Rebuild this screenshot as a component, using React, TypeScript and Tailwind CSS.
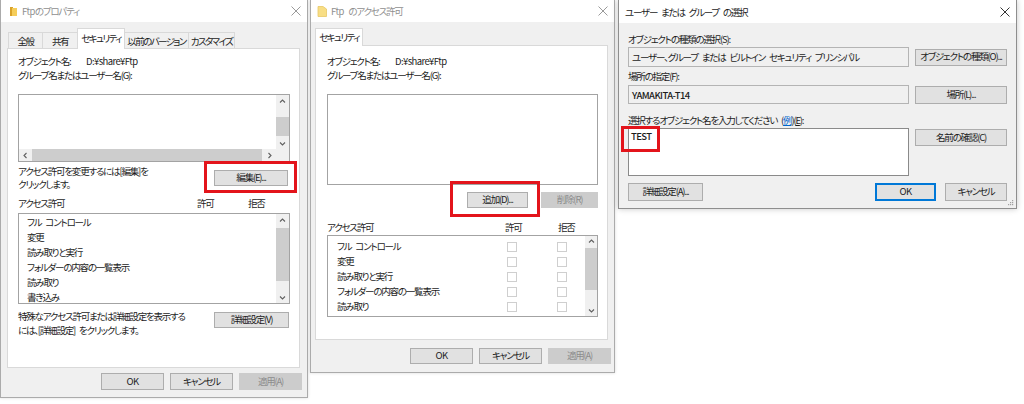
import React from 'react';

type Dir = 'up' | 'down' | 'left' | 'right';

const ARROWS: Record<Dir, string> = {
  up: 'M1 4.5 L3.5 2 L6 4.5',
  down: 'M1 2.5 L3.5 5 L6 2.5',
  left: 'M4.5 1 L2 3.5 L4.5 6',
  right: 'M2.5 1 L5 3.5 L2.5 6',
};

const Arrow = ({ dir }: { dir: Dir }) => (
  <svg width="7" height="7" viewBox="0 0 7 7">
    <path d={ARROWS[dir]} fill="none" stroke="#606060" strokeWidth="1.1" />
  </svg>
);

const CloseX = ({ color }: { color: string }) => (
  <svg width="10" height="10" viewBox="0 0 10 10">
    <path d="M0.5 0.5 L9.5 9.5 M9.5 0.5 L0.5 9.5" stroke={color} strokeWidth="1" />
  </svg>
);

const FolderSmall = () => (
  <svg width="7" height="9" viewBox="0 0 7 9">
    <rect x="0" y="0" width="3" height="9" fill="#d9a22a" />
    <rect x="2" y="1" width="5" height="8" fill="#f5cd5a" />
  </svg>
);

const FolderPale = () => (
  <svg width="10" height="11" viewBox="0 0 10 11">
    <path d="M1 0.5 H6 L9.5 3 V10.5 H1 Z" fill="#f8de85" stroke="#e9c866" strokeWidth="0.8" />
  </svg>
);

function Btn({
  children,
  className = '',
  disabled = false,
  focused = false,
}: {
  children: React.ReactNode;
  className?: string;
  disabled?: boolean;
  focused?: boolean;
}) {
  const look = disabled
    ? 'bg-[#cccccc] border border-[#cccccc] text-[#8d8d8d]'
    : focused
    ? 'bg-[#e1e1e1] border-2 border-[#0078d7]'
    : 'bg-[#e1e1e1] border border-[#adadad]';
  return (
    <div className={`flex items-center justify-center leading-none whitespace-nowrap ${look} ${className}`}>{children}</div>
  );
}

// vertical scrollbar: arrow / spacer / thumb / rest / arrow
function VScroll({ w, arrow, pre, thumb }: { w: string; arrow: string; pre: string; thumb: string }) {
  return (
    <div className={`${w} h-full bg-[#f0f0f0] flex flex-col shrink-0`}>
      <div className={`${arrow} flex items-center justify-center`}>
        <Arrow dir="up" />
      </div>
      <div className={pre} />
      <div className={`${thumb} bg-[#cdcdcd]`} />
      <div className="flex-1" />
      <div className={`${arrow} flex items-center justify-center`}>
        <Arrow dir="down" />
      </div>
    </div>
  );
}

const Checkbox = () => <div className="w-[10px] h-[10px] shrink-0 border border-[#cfcfcf] bg-white" />;

const RedBox = ({ className }: { className: string }) => (
  <div className={`absolute border-[3px] border-[#e3141b] pointer-events-none ${className}`} />
);

// latin text keeps a milder squeeze than the kana
const Latin = ({ children, className = '' }: { children: React.ReactNode; className?: string }) => (
  <span className={`tracking-[-0.6px] ${className}`}>{children}</span>
);

const perms1 = ['フル コントロール', '変更', '読み取りと実行', 'フォルダーの内容の一覧表示', '読み取り', '書き込み'];
const perms2 = ['フル コントロール', '変更', '読み取りと実行', 'フォルダーの内容の一覧表示', '読み取り'];

function PropertiesDialog() {
  return (
    <div className="w-[308px] h-[398px] shrink-0 bg-[#f0f0f0] border-x border-b border-[#ababab] flex flex-col shadow-[0_0_3px_rgba(0,0,0,0.15)]">
      <div className="h-[22px] bg-white flex items-center pl-[9px] pr-[6px]">
        <FolderSmall />
        <span className="ml-[5px] text-[#8f8f8f]">
          <Latin>Ftp</Latin>のプロパティ
        </span>
        <span className="ml-auto flex">
          <CloseX color="#9a9a9a" />
        </span>
      </div>

      {/* tabs */}
      <div className="mt-[6px] ml-[7px] h-[20px] flex items-end whitespace-nowrap tracking-[-1.6px]">
        <div className="w-[34px] h-[16px] border-l border-t border-[#d9d9d9] flex items-center justify-center">全般</div>
        <div className="w-[35px] h-[16px] border-l border-t border-[#d9d9d9] flex items-center justify-center">共有</div>
        <div className="relative z-10 -mb-px w-[48px] h-[21px] bg-white border-x border-t border-[#d9d9d9] flex items-center justify-center pb-[2px]">
          セキュリティ
        </div>
        <div className="w-[63px] h-[16px] border-t border-[#d9d9d9] flex items-center justify-center">以前のバージョン</div>
        <div className="w-[47px] h-[16px] border-x border-t border-[#d9d9d9] flex items-center justify-center">カスタマイズ</div>
      </div>

      <div className="ml-[6px] w-[293px] h-[320px] bg-white border border-[#d9d9d9] pl-[10px] pt-[5px]">
        <div className="flex">
          <span className="w-[68px]">オブジェクト名:</span>
          <Latin>D:¥share¥Ftp</Latin>
        </div>
        <div>グループ名またはユーザー名(G):</div>

        <div className="mt-[12px] w-[272px] h-[68px] border border-[#a3a3a3] flex flex-col">
          <div className="flex-1 flex">
            <div className="flex-1 bg-white" />
            <VScroll w="w-[13px]" arrow="h-[12px]" pre="h-[10px]" thumb="h-[19px]" />
          </div>
          <div className="h-[12px] flex bg-[#f0f0f0]">
            <div className="w-[13px] flex items-center justify-center">
              <Arrow dir="left" />
            </div>
            <div className="w-[230px] bg-[#cdcdcd]" />
            <div className="flex-1" />
            <div className="w-[13px] flex items-center justify-center">
              <Arrow dir="right" />
            </div>
            <div className="w-[13px]" />
          </div>
        </div>

        <div className="mt-[3px] w-[272px] flex items-start">
          <div className="flex-1 leading-[13px]">
            アクセス許可を変更するには[編集]を
            <br />
            クリックします。
          </div>
          <div className="relative mt-[5px] mr-[2px]">
            <Btn className="w-[74px] h-[16px]">編集(E)...</Btn>
            <RedBox className="-left-[10px] -right-[9px] -top-[9px] -bottom-[7px]" />
          </div>
        </div>

        <div className="mt-[5px] flex">
          <span className="w-[179px]">アクセス許可</span>
          <span className="w-[51px]">許可</span>
          <span>拒否</span>
        </div>

        <div className="mt-[3px] w-[272px] h-[91px] border border-[#a3a3a3] flex overflow-hidden">
          <div className="flex-1 pl-[8px] pt-[1px] leading-[13px]">
            {perms1.map((p) => (
              <div key={p} className="h-[15px] flex items-center">
                {p}
              </div>
            ))}
          </div>
          <VScroll w="w-[13px]" arrow="h-[12px]" pre="h-[2px]" thumb="h-[53px]" />
        </div>

        <div className="mt-[5px] w-[272px] flex items-start">
          <div className="flex-1">
            特殊なアクセス許可または詳細設定を表示する
            <br />
            には、[詳細設定] をクリックします。
          </div>
          <Btn className="mt-[3px] mr-[1px] w-[75px] h-[16px]">詳細設定(V)</Btn>
        </div>
      </div>

      <div className="mt-[5px] pr-[5px] flex justify-end gap-[6px]">
        <Btn className="w-[63px] h-[17px]">
          <Latin>OK</Latin>
        </Btn>
        <Btn className="w-[63px] h-[17px]">キャンセル</Btn>
        <Btn className="w-[63px] h-[17px]" disabled>
          適用(A)
        </Btn>
      </div>
    </div>
  );
}

function PermissionDialog() {
  return (
    <div className="ml-[2px] w-[305px] h-[373px] shrink-0 bg-[#f0f0f0] border-x border-b border-[#ababab] flex flex-col shadow-[0_0_3px_rgba(0,0,0,0.15)]">
      <div className="h-[22px] bg-white flex items-center pl-[6px] pr-[6px]">
        <FolderPale />
        <span className="ml-[4px] text-[#8f8f8f]">
          <Latin>Ftp </Latin>のアクセス許可
        </span>
        <span className="ml-auto flex">
          <CloseX color="#9a9a9a" />
        </span>
      </div>

      <div className="mt-[6px] ml-[4px] h-[17px] flex items-end whitespace-nowrap tracking-[-1.6px]">
        <div className="relative z-10 -mb-px w-[48px] h-[18px] bg-white border-x border-t border-[#d9d9d9] flex items-center justify-center pb-[1px]">
          セキュリティ
        </div>
      </div>

      <div className="ml-[4px] w-[293px] h-[295px] bg-white border border-[#d9d9d9] pl-[11px] pt-[8px]">
        <div className="flex">
          <span className="w-[68px]">オブジェクト名:</span>
          <Latin>D:¥share¥Ftp</Latin>
        </div>
        <div>グループ名またはユーザー名(G):</div>

        <div className="mt-[12px] w-[271px] h-[91px] border border-[#a3a3a3] bg-white" />

        <div className="mt-[7px] w-[271px] flex justify-end gap-[13px]">
          <div className="relative">
            <Btn className="w-[61px] h-[16px]">追加(D)...</Btn>
            <RedBox className="-left-[17px] -right-[12px] -top-[11px] -bottom-[9px]" />
          </div>
          <Btn className="w-[57px] h-[16px]" disabled>
            削除(R)
          </Btn>
        </div>

        <div className="mt-[12px] flex">
          <span className="w-[178px]">アクセス許可</span>
          <span className="w-[53px]">許可</span>
          <span>拒否</span>
        </div>

        <div className="mt-[1px] w-[271px] h-[82px] border border-[#a3a3a3] flex overflow-hidden">
          <div className="flex-1 pt-[3px] pl-[9px] leading-[13px]">
            {perms2.map((p) => (
              <div key={p} className="h-[15px] flex items-center">
                <span className="w-[170px] shrink-0">{p}</span>
                <Checkbox />
                <span className="w-[40px] shrink-0" />
                <Checkbox />
              </div>
            ))}
          </div>
          <VScroll w="w-[12px]" arrow="h-[11px]" pre="h-[1px]" thumb="h-[42px]" />
        </div>
      </div>

      <div className="mt-[8px] pr-[3px] flex justify-end gap-[6px]">
        <Btn className="w-[63px] h-[16px]">
          <Latin>OK</Latin>
        </Btn>
        <Btn className="w-[63px] h-[16px]">キャンセル</Btn>
        <Btn className="w-[63px] h-[16px]" disabled>
          適用(A)
        </Btn>
      </div>
    </div>
  );
}

function SelectUserDialog() {
  return (
    <div className="relative ml-[3px] w-[399px] h-[209px] shrink-0 bg-[#f0f0f0] border-x border-b border-[#8e8e8e] flex flex-col shadow-[0_0_6px_rgba(0,0,0,0.22)]">
      <div className="h-[23px] bg-white flex items-center pl-[6px] pr-[6px]">
        <span>ユーザー または グループ の選択</span>
        <span className="ml-auto flex">
          <CloseX color="#333333" />
        </span>
      </div>

      <div className="px-[9px] pt-[10px]">
        <div className="leading-[13px]">オブジェクトの種類の選択(S):</div>
        <div className="mt-[1px] flex items-center gap-[6px]">
          <div className="w-[281px] h-[20px] border border-[#b4b4b4] bg-[#f0f0f0] flex items-center pl-[3px] whitespace-nowrap">
            ユーザー、グループ または ビルトイン セキュリティ プリンシパル
          </div>
          <Btn className="w-[92px] h-[17px]">オブジェクトの種類(O)...</Btn>
        </div>

        <div className="mt-[3px] leading-[13px]">場所の指定(F):</div>
        <div className="mt-[2px] flex items-center gap-[6px]">
          <div className="w-[281px] h-[19px] border border-[#b4b4b4] bg-[#f0f0f0] flex items-center pl-[3px] font-medium">
            <Latin>YAMAKITA-T14</Latin>
          </div>
          <Btn className="w-[92px] h-[18px]">場所(L)...</Btn>
        </div>

        <div className="mt-[10px] leading-[13px] whitespace-nowrap">
          選択するオブジェクト名を入力してください (<span className="text-[#0066cc] underline">例</span>)(
          <span className="underline">E</span>):
        </div>
        <div className="mt-[1px] flex items-start gap-[6px]">
          <div className="relative w-[281px] h-[48px] border border-[#8a8a8a] bg-white pl-[2px] pt-[1px] leading-[13px] font-medium">
            <Latin>TEST</Latin>
            <RedBox className="-left-[8px] -top-[3px] w-[39px] h-[26px]" />
          </div>
          <Btn className="mt-[1px] w-[92px] h-[17px]">名前の確認(C)</Btn>
        </div>

        <div className="mt-[7px] flex items-center">
          <Btn className="w-[75px] h-[18px]">詳細設定(A)...</Btn>
          <Btn className="ml-auto w-[61px] h-[18px]" focused>
            <Latin>OK</Latin>
          </Btn>
          <Btn className="ml-[9px] w-[62px] h-[18px]">キャンセル</Btn>
        </div>
      </div>

      <svg className="absolute right-[2px] bottom-[2px]" width="6" height="6" viewBox="0 0 6 6">
        <rect x="4" y="0" width="1.2" height="1.2" fill="#a0a0a0" />
        <rect x="2" y="2" width="1.2" height="1.2" fill="#a0a0a0" />
        <rect x="4" y="2" width="1.2" height="1.2" fill="#a0a0a0" />
        <rect x="0" y="4" width="1.2" height="1.2" fill="#a0a0a0" />
        <rect x="2" y="4" width="1.2" height="1.2" fill="#a0a0a0" />
        <rect x="4" y="4" width="1.2" height="1.2" fill="#a0a0a0" />
      </svg>
    </div>
  );
}

export default function App() {
  return (
    <div className="w-[1024px] h-[404px] bg-white flex items-start overflow-hidden font-['Noto_Sans_CJK_JP',sans-serif] text-[9.5px] leading-[14px] tracking-[-1.2px] [word-spacing:3px] text-[#1c1c1c] [font-feature-settings:'palt']">
      <PropertiesDialog />
      <PermissionDialog />
      <SelectUserDialog />
    </div>
  );
}
